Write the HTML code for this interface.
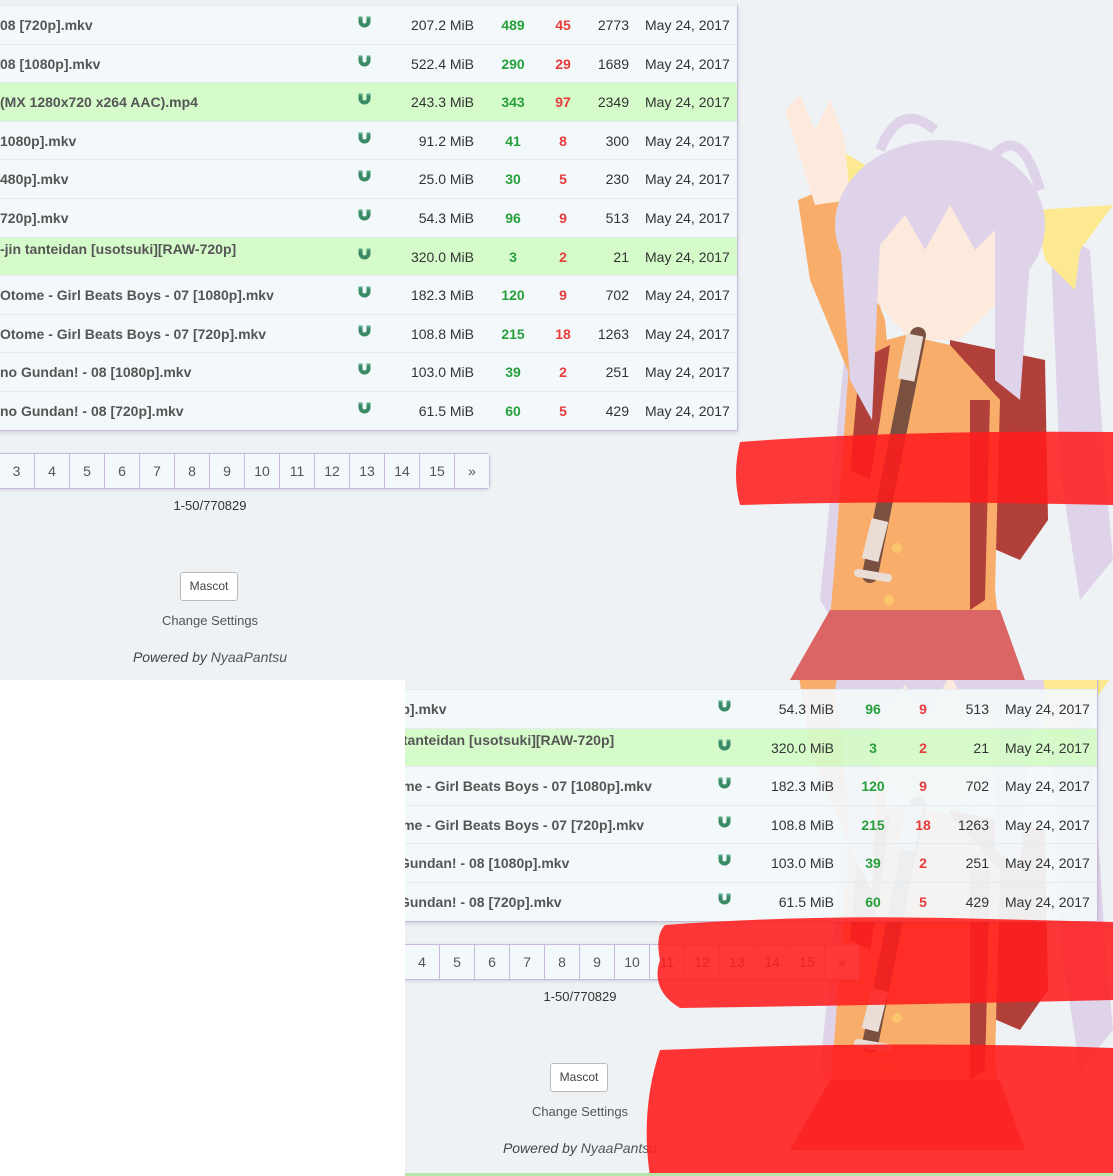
<!DOCTYPE html>
<html><head><meta charset="utf-8">
<style>
*{margin:0;padding:0;box-sizing:border-box}
body{width:1113px;height:1176px;overflow:hidden;position:relative;background:#fff;font-family:"Liberation Sans",Arial,sans-serif}
.sec{position:absolute;overflow:hidden;background:#eef2f4}
.pg{position:absolute;left:0;top:0;width:1113px;height:700px}
.tbl{position:absolute;left:-300px;top:5px;width:1038px;border-right:1px solid #c9b9dd;border-bottom:1px solid #c9b9dd;box-shadow:0 2px 4px rgba(0,0,0,.12)}
.r{position:relative;height:38.6px;background:rgba(243,248,250,.94);border-top:1px solid #e3ebee;font-size:14px;color:#333}
.r.g{background:rgba(212,251,200,.95)}
.r span{position:absolute;top:11px;white-space:nowrap}
.n{left:300px;font-weight:bold;color:#555}
#bot .n{left:318px}
.m{left:658px;top:9px!important}
.s{right:263px}
.se{left:798px;width:30px;text-align:center;font-weight:bold;color:#27a03b}
.le{left:848px;width:30px;text-align:center;font-weight:bold;color:#e63b3b}
.c{right:108px}
.d{left:945px;color:#333}
.pag{position:absolute;left:-2px;top:453px;display:flex;border:1px solid #c9b9dd;border-radius:0 4px 4px 0;box-shadow:0 1px 3px rgba(0,0,0,.12)}
.pag div{width:35px;height:34px;line-height:34px;text-align:center;font-size:14px;color:#555;background:#f3f8fa;border-left:1px solid #c9b9dd}
.pag div:first-child{border-left:none}
.ctr{position:absolute;left:110px;width:200px;text-align:center;font-size:13px;color:#333}
.btn{position:absolute;left:180px;top:572px;width:58px;height:29px;border:1px solid #bbb;border-radius:3px;background:#fff;font-size:12px;color:#444;text-align:center;line-height:27px}
#bot .ft{position:absolute;left:10px;top:0;width:1113px;height:700px}
#bot .pag{left:8px}
</style></head><body>
<svg width="0" height="0" style="position:absolute">
 <defs>
  <g id="masc">
   <path d="M850 300 L875 330 L865 520 L845 640 L820 600 Z" fill="#dfd3ea"/>
   <path d="M1050 230 L1090 250 L1105 470 L1113 560 L1080 600 L1060 470 Z" fill="#dfd3ea"/>
   <path d="M840 150 L890 180 L880 215 L845 195 Z" fill="#fde98f"/>
   <path d="M1035 210 L1113 205 L1080 250 L1075 290 L1045 260 Z" fill="#fde98f"/>
   <path d="M798 200 L835 185 L885 320 L895 430 L860 400 L810 280 Z" fill="#f8ad6b"/>
   <path d="M785 110 L800 95 L815 130 L830 100 L845 140 L850 200 L815 205 Z" fill="#fdeadd"/>
   <path d="M950 340 L1045 360 L1048 520 L1020 560 L985 545 L950 460 Z" fill="#b2403a"/>
   <path d="M850 350 L905 335 L950 345 L1000 400 L995 590 L1005 680 L825 680 L835 560 Z" fill="#f8ad6b"/>
   <path d="M860 360 L890 345 L880 420 L870 480 L850 470 Z" fill="#b2403a"/>
   <path d="M970 400 L990 400 L985 600 L970 610 Z" fill="#b2403a"/>
   <path d="M790 680 L830 610 L1000 610 L1025 680 Z" fill="#db6464"/>
   <ellipse cx="940" cy="225" rx="105" ry="85" fill="#dfd3ea"/>
   <path d="M880 150 Q900 100 935 130 M990 160 Q1020 120 1040 190" stroke="#dfd3ea" stroke-width="10" fill="none"/>
   <path d="M880 245 L905 215 L925 250 L950 205 L975 250 L995 230 L1000 300 L960 340 L910 340 L875 300 Z" fill="#fdeadd"/>
   <path d="M840 240 L880 240 L872 420 L850 380 Z" fill="#dfd3ea"/>
   <path d="M995 230 L1030 260 L1020 400 L995 380 Z" fill="#dfd3ea"/>
   <path d="M918 335 L870 575" stroke="#7a5040" stroke-width="16" stroke-linecap="round"/>
   <path d="M915 335 L906 380" stroke="#e9ddd6" stroke-width="17"/>
   <path d="M880 520 L870 560" stroke="#e9ddd6" stroke-width="17"/>
   <path d="M858 573 L888 578" stroke="#e9ddd6" stroke-width="8" stroke-linecap="round"/>
   <circle cx="897" cy="548" r="5" fill="#fbc66b"/><circle cx="889" cy="600" r="5" fill="#fbc66b"/>
  </g>
 </defs>
</svg>

<!-- TOP SECTION -->
<div class="sec" style="left:0;top:0;width:1113px;height:680px">
 <svg style="position:absolute;left:0;top:0" width="1113" height="680">
  <use href="#masc"/>
  <path d="M740 442 Q900 430 1113 432 L1113 468 L1113 505 Q900 500 740 505 Q732 475 740 442 Z" fill="rgba(255,28,28,.87)"/>
 </svg>
 <div class="pg">
  <div class="tbl">
   <div class="r"><span class="n">08 [720p].mkv</span><span class="m">M</span><span class="s">207.2 MiB</span><span class="se">489</span><span class="le">45</span><span class="c">2773</span><span class="d">May 24, 2017</span></div>
   <div class="r"><span class="n">08 [1080p].mkv</span><span class="m">M</span><span class="s">522.4 MiB</span><span class="se">290</span><span class="le">29</span><span class="c">1689</span><span class="d">May 24, 2017</span></div>
   <div class="r g"><span class="n">(MX 1280x720 x264 AAC).mp4</span><span class="m">M</span><span class="s">243.3 MiB</span><span class="se">343</span><span class="le">97</span><span class="c">2349</span><span class="d">May 24, 2017</span></div>
   <div class="r"><span class="n">1080p].mkv</span><span class="m">M</span><span class="s">91.2 MiB</span><span class="se">41</span><span class="le">8</span><span class="c">300</span><span class="d">May 24, 2017</span></div>
   <div class="r"><span class="n">480p].mkv</span><span class="m">M</span><span class="s">25.0 MiB</span><span class="se">30</span><span class="le">5</span><span class="c">230</span><span class="d">May 24, 2017</span></div>
   <div class="r"><span class="n">720p].mkv</span><span class="m">M</span><span class="s">54.3 MiB</span><span class="se">96</span><span class="le">9</span><span class="c">513</span><span class="d">May 24, 2017</span></div>
   <div class="r g"><span class="n" style="top:3px">-jin tanteidan [usotsuki][RAW-720p]</span><span class="m">M</span><span class="s">320.0 MiB</span><span class="se">3</span><span class="le">2</span><span class="c">21</span><span class="d">May 24, 2017</span></div>
   <div class="r"><span class="n">Otome - Girl Beats Boys - 07 [1080p].mkv</span><span class="m">M</span><span class="s">182.3 MiB</span><span class="se">120</span><span class="le">9</span><span class="c">702</span><span class="d">May 24, 2017</span></div>
   <div class="r"><span class="n">Otome - Girl Beats Boys - 07 [720p].mkv</span><span class="m">M</span><span class="s">108.8 MiB</span><span class="se">215</span><span class="le">18</span><span class="c">1263</span><span class="d">May 24, 2017</span></div>
   <div class="r"><span class="n">no Gundan! - 08 [1080p].mkv</span><span class="m">M</span><span class="s">103.0 MiB</span><span class="se">39</span><span class="le">2</span><span class="c">251</span><span class="d">May 24, 2017</span></div>
   <div class="r"><span class="n">no Gundan! - 08 [720p].mkv</span><span class="m">M</span><span class="s">61.5 MiB</span><span class="se">60</span><span class="le">5</span><span class="c">429</span><span class="d">May 24, 2017</span></div>
  </div>
  <div class="pag"><div>3</div><div>4</div><div>5</div><div>6</div><div>7</div><div>8</div><div>9</div><div>10</div><div>11</div><div>12</div><div>13</div><div>14</div><div>15</div><div>»</div></div>
  <div class="ctr" style="top:498px">1-50/770829</div>
  <div class="btn">Mascot</div>
  <div class="ctr" style="top:613px;color:#555">Change Settings</div>
  <div class="ctr" style="top:649px;color:#444;font-style:italic;font-size:14px">Powered by <span style="color:#555">NyaaPantsu</span></div>
 </div>
</div>

<!-- BOTTOM SECTION -->
<div class="sec" id="bot" style="left:405px;top:680px;width:708px;height:496px">
 <svg style="position:absolute;left:0;top:0" width="708" height="496">
  <g transform="translate(-405,-210)"><use href="#masc"/></g>
 </svg>
 <div class="pg" style="left:-45px;top:-189px">
  <div class="tbl">
   <div class="r" style="visibility:hidden"></div><div class="r" style="visibility:hidden"></div><div class="r" style="visibility:hidden"></div><div class="r" style="visibility:hidden"></div><div class="r" style="visibility:hidden"></div>
   <div class="r"><span class="n">720p].mkv</span><span class="m">M</span><span class="s">54.3 MiB</span><span class="se">96</span><span class="le">9</span><span class="c">513</span><span class="d">May 24, 2017</span></div>
   <div class="r g"><span class="n" style="top:3px">-jin tanteidan [usotsuki][RAW-720p]</span><span class="m">M</span><span class="s">320.0 MiB</span><span class="se">3</span><span class="le">2</span><span class="c">21</span><span class="d">May 24, 2017</span></div>
   <div class="r"><span class="n">Otome - Girl Beats Boys - 07 [1080p].mkv</span><span class="m">M</span><span class="s">182.3 MiB</span><span class="se">120</span><span class="le">9</span><span class="c">702</span><span class="d">May 24, 2017</span></div>
   <div class="r"><span class="n">Otome - Girl Beats Boys - 07 [720p].mkv</span><span class="m">M</span><span class="s">108.8 MiB</span><span class="se">215</span><span class="le">18</span><span class="c">1263</span><span class="d">May 24, 2017</span></div>
   <div class="r"><span class="n">no Gundan! - 08 [1080p].mkv</span><span class="m">M</span><span class="s">103.0 MiB</span><span class="se">39</span><span class="le">2</span><span class="c">251</span><span class="d">May 24, 2017</span></div>
   <div class="r"><span class="n">no Gundan! - 08 [720p].mkv</span><span class="m">M</span><span class="s">61.5 MiB</span><span class="se">60</span><span class="le">5</span><span class="c">429</span><span class="d">May 24, 2017</span></div>
  </div>
  <div class="pag"><div>3</div><div>4</div><div>5</div><div>6</div><div>7</div><div>8</div><div>9</div><div>10</div><div>11</div><div>12</div><div>13</div><div>14</div><div>15</div><div>»</div></div>
  <div class="ft">
   <div class="ctr" style="top:498px">1-50/770829</div>
   <div class="btn">Mascot</div>
   <div class="ctr" style="top:613px;color:#555">Change Settings</div>
   <div class="ctr" style="top:649px;color:#444;font-style:italic;font-size:14px">Powered by <span style="color:#555">NyaaPantsu</span></div>
  </div>
 </div>
 <svg style="position:absolute;left:0;top:0" width="708" height="496">
  <g transform="translate(-405,-680)">
   <path d="M665 925 Q800 915 950 918 Q1030 920 1113 922 L1113 1000 Q900 1005 680 1008 Q650 990 660 960 Q655 935 665 925 Z" fill="rgba(255,28,28,.88)"/>
   <path d="M660 1050 Q900 1040 1113 1048 L1113 1176 L650 1176 Q640 1110 660 1050 Z" fill="rgba(255,30,30,.9)"/>
  </g>
  <rect x="0" y="493" width="708" height="3" fill="#b8e6a8"/>
 </svg>
</div>

<script>
document.querySelectorAll('.m').forEach(function(e){e.innerHTML='<svg width="13" height="12" viewBox="0 0 13 12"><path d="M0.5 0.5h4v5a2 2 0 0 0 4 0v-5h4v5a6 6 0 0 1-12 0z" fill="#3a8a66"/><rect x="0.5" y="0.5" width="4" height="2" fill="#5aa888"/><rect x="8.5" y="0.5" width="4" height="2" fill="#5aa888"/></svg>';});
</script>
</body></html>
